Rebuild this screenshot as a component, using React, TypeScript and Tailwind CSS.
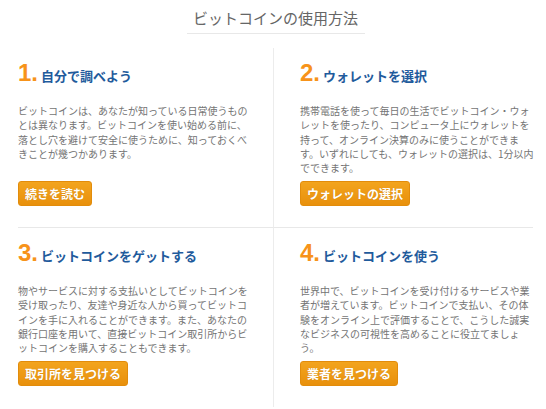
import React from "react";

const steps = [
  {
    num: "1.",
    title: "自分で調べよう",
    body: "ビットコインは、あなたが知っている日常使うものとは異なります。ビットコインを使い始める前に、落とし穴を避けて安全に使うために、知っておくべきことが幾つかあります。",
    action: "続きを読む",
  },
  {
    num: "2.",
    title: "ウォレットを選択",
    body: "携帯電話を使って毎日の生活でビットコイン・ウォレットを使ったり、コンピュータ上にウォレットを持って、オンライン決算のみに使うことができます。いずれにしても、ウォレットの選択は、1分以内でできます。",
    action: "ウォレットの選択",
  },
  {
    num: "3.",
    title: "ビットコインをゲットする",
    body: "物やサービスに対する支払いとしてビットコインを受け取ったり、友達や身近な人から買ってビットコインを手に入れることができます。また、あなたの銀行口座を用いて、直接ビットコイン取引所からビットコインを購入することもできます。",
    action: "取引所を見つける",
  },
  {
    num: "4.",
    title: "ビットコインを使う",
    body: "世界中で、ビットコインを受け付けるサービスや業者が増えています。ビットコインで支払い、その体験をオンライン上で評価することで、こうした誠実なビジネスの可視性を高めることに役立てましょう。",
    action: "業者を見つける",
  },
];

const cjk = { fontFamily: '"Noto Sans CJK JP", "Noto Sans", sans-serif' };

export default function App() {
  return (
    <div className="w-[546px] h-[409px] overflow-hidden bg-white" style={cjk}>
      {/* Page title */}
      <div className="flex justify-center pl-[5px] pt-[8px]">
        <h2 className="w-[178px] border-b border-[#e8e8e8] pb-[5px] text-center text-[15px] leading-[20px] font-normal text-[#666]">
          ビットコインの使用方法
        </h2>
      </div>

      {/* Steps grid */}
      <div className="mt-[14px] ml-[18px] w-[515px] grid grid-cols-[256px_259px]">
        {steps.map((s, i) => (
          <div
            key={s.num}
            className={`pt-[11px] ${i % 2 === 0 ? "border-r border-[#ececec]" : "pl-[26px]"} ${
              i < 2 ? "pb-[21px] border-b border-b-[#e8e8e8]" : "pb-[21px]"
            }`}
          >
            <div className="flex items-baseline h-[28px]">
              <span
                className="text-[24px] leading-[28px] font-bold text-[#f7931a]"
                style={{ fontFamily: '"Liberation Sans", Arial, sans-serif' }}
              >
                {s.num}
              </span>
              <span className="ml-[3px] text-[13px] font-bold text-[#1f5b9c]">{s.title}</span>
            </div>
            <p className="mt-[17px] w-[237px] min-h-[72px] text-[10px] leading-[14.3px] text-[#747474]">
              {s.body}
            </p>
            <button
              className="mt-[5px] h-[25px] px-[6px] flex items-center rounded-[3px] border border-[#e28c0b] bg-gradient-to-b from-[#f3a41d] to-[#e8900b] text-[12px] font-bold text-white [text-shadow:0_0_1px_rgba(0,0,0,0.15)]"
            >
              {s.action}
            </button>
          </div>
        ))}
      </div>
    </div>
  );
}
